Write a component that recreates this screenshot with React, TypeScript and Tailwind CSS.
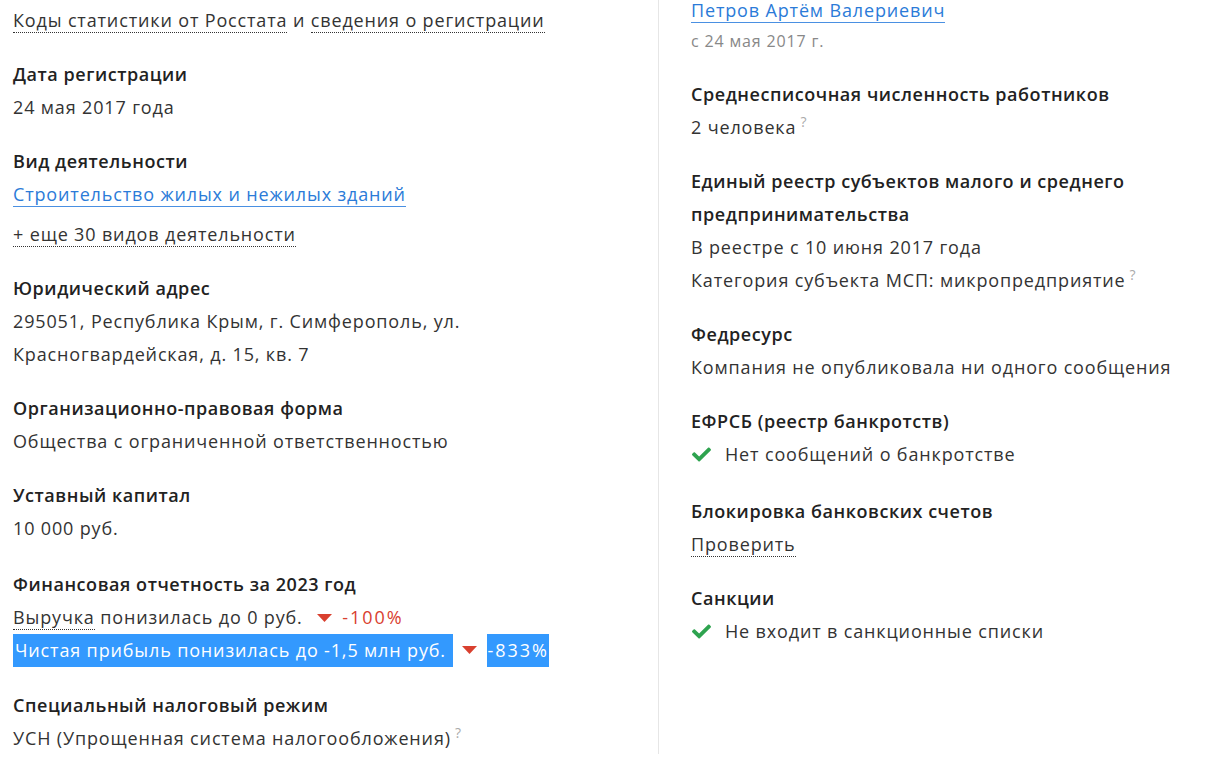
import { FaCheck } from "react-icons/fa";

const font = { fontFamily: '"Open Sans", "Noto Sans", sans-serif' };

const Title = ({ children }: { children: React.ReactNode }) => (
  <div className="font-semibold text-[#222] tracking-[0.55px]">{children}</div>
);

const Hint = () => <sup className="ml-1 text-[14px] text-[#aaa] font-normal">?</sup>;

const Dotted = ({ children }: { children: React.ReactNode }) => (
  <span className="border-b border-dotted border-[#333] cursor-pointer">{children}</span>
);

const Down = () => (
  <svg width="15" height="8" viewBox="0 0 15 8" className="inline-block ml-[9px] mr-[10px] mb-[2px]">
    <path d="M0 0 L15 0 L7.5 8 Z" fill="#d9402f" />
  </svg>
);

const Ok = ({ children }: { children: React.ReactNode }) => (
  <div className="flex items-center gap-[13px]">
    <FaCheck className="text-[#2ea34f] w-[21px] h-[19px]" />
    <span>{children}</span>
  </div>
);

export default function App() {
  return (
    <div className="min-h-screen bg-white text-[18px] leading-[33px] text-[#333] tracking-[0.85px]" style={font}>
      <div className="flex">
        {/* левая колонка */}
        <div className="w-[658px] pl-[13px] pt-[4px] flex flex-col gap-[21px]">
          <div>
            <Dotted>Коды статистики от Росстата</Dotted> и <Dotted>сведения о регистрации</Dotted>
          </div>
          <div>
            <Title>Дата регистрации</Title>
            <div>24 мая 2017 года</div>
          </div>
          <div>
            <Title>Вид деятельности</Title>
            <div>
              <a className="text-[#2b7bd8] border-b border-[#4a90e2] cursor-pointer">
                Строительство жилых и нежилых зданий
              </a>
            </div>
            <div className="mt-[7px]">
              <Dotted>+ еще 30 видов деятельности</Dotted>
            </div>
          </div>
          <div>
            <Title>Юридический адрес</Title>
            <div className="w-[500px]">
              295051, Республика Крым, г. Симферополь, ул. Красногвардейская, д. 15, кв. 7
            </div>
          </div>
          <div>
            <Title>Организационно-правовая форма</Title>
            <div>Общества с ограниченной ответственностью</div>
          </div>
          <div>
            <Title>Уставный капитал</Title>
            <div>10 000 руб.</div>
          </div>
          <div className="mt-[2px]">
            <Title>Финансовая отчетность за 2023 год</Title>
            <div>
              <Dotted>Выручка</Dotted> понизилась до 0 руб.&nbsp;
              <Down />
              <span className="text-[#d9402f] tracking-[2px]">-100%</span>
            </div>
            <div className="flex items-center">
              <span className="bg-[#3399fe] text-white pl-[2px] pr-[2px]">
                Чистая прибыль понизилась до -1,5 млн руб.&nbsp;
              </span>
              <Down />
              <span className="bg-[#3399fe] text-white tracking-[2px]">-833%</span>
            </div>
          </div>
          <div className="mt-[1px]">
            <Title>Специальный налоговый режим</Title>
            <div>
              УСН (Упрощенная система налогообложения)
              <Hint />
            </div>
          </div>
        </div>

        {/* правая колонка */}
        <div className="flex-1 border-l border-[#e6e6e6] pl-[32px] h-[754px]">
          <div className="-mt-[6px] flex flex-col gap-[21px]">
            <div>
              <div>
                <a className="text-[#2b7bd8] border-b border-[#4a90e2] cursor-pointer">
                  Петров Артём Валериевич
                </a>
              </div>
              <div className="text-[16px] leading-[28px] text-[#888] mb-[2px]">с 24 мая 2017 г.</div>
            </div>
            <div>
              <Title>Среднесписочная численность работников</Title>
              <div>
                2 человека
                <Hint />
              </div>
            </div>
            <div>
              <Title>
                Единый реестр субъектов малого и среднего
                <br />
                предпринимательства
              </Title>
              <div>В реестре с 10 июня 2017 года</div>
              <div>
                Категория субъекта МСП: микропредприятие
                <Hint />
              </div>
            </div>
            <div>
              <Title>Федресурс</Title>
              <div>Компания не опубликовала ни одного сообщения</div>
            </div>
            <div>
              <Title>ЕФРСБ (реестр банкротств)</Title>
              <Ok>Нет сообщений о банкротстве</Ok>
            </div>
            <div className="mt-[3px]">
              <Title>Блокировка банковских счетов</Title>
              <div>
                <Dotted>Проверить</Dotted>
              </div>
            </div>
            <div>
              <Title>Санкции</Title>
              <Ok>Не входит в санкционные списки</Ok>
            </div>
          </div>
        </div>
      </div>
    </div>
  );
}
